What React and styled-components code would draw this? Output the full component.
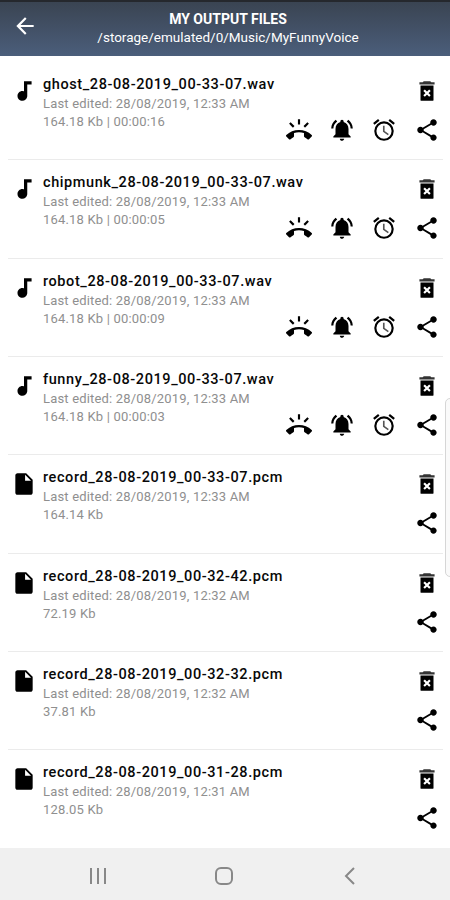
import React from "react";
import styled, { createGlobalStyle } from "styled-components";
import {
  MdArrowBack,
  MdAudiotrack,
  MdInsertDriveFile,
  MdRingVolume,
  MdNotificationsActive,
  MdShare,
} from "react-icons/md";

const GlobalStyle = createGlobalStyle`
  * { box-sizing: border-box; }
  body { margin: 0; background: #fff; font-family: Roboto, sans-serif; }
`;

const Screen = styled.div`
  position: relative;
  display: flex;
  flex-direction: column;
  width: 450px;
  height: 900px;
  overflow: hidden;
  background: #fff;
`;

const Header = styled.header`
  display: grid;
  grid-template-columns: 50px 1fr 44px;
  height: 56px;
  flex: none;
  border-top: 2px solid #25282d;
  background: linear-gradient(#3a4452, #4b5e7b);
  color: #fff;
`;

const BackButton = styled.button`
  display: flex;
  padding: 11px 0 0 11.5px;
  border: 0;
  background: none;
  color: inherit;
`;

const Heading = styled.div`
  padding-top: 8px;
  text-align: center;
  white-space: nowrap;
`;

const Title = styled.h1`
  margin: 0;
  font-size: 14px;
  line-height: 19px;
  font-weight: 700;
`;

const Path = styled.p`
  margin: 0;
  font-size: 13.5px;
  line-height: 17px;
`;

const List = styled.ul`
  display: flex;
  flex-direction: column;
  height: 792px;
  margin: 0;
  padding: 6.2px 7px 0 8px;
  list-style: none;
`;

const Row = styled.li`
  display: grid;
  grid-template-columns: 35px 1fr auto;
  height: 98.3px;
  flex: none;
  border-bottom: 1px solid #ebebeb;
  color: #000;
  &:last-child { border-bottom: 0; }
`;

const FileIcon = styled.div`
  padding: 16px 0 0 3.4px;
`;

const Details = styled.div`
  padding-top: 13px;
  white-space: nowrap;
`;

const Name = styled.div`
  width: 0;
  font-size: 14.5px;
  line-height: 20px;
  font-weight: 500;
  letter-spacing: 0.59px;
  color: #080808;
`;

const Meta = styled.div`
  width: 0;
  font-size: 13px;
  line-height: 18px;
  letter-spacing: 0.18px;
  color: #8f8f8f;
`;

const Actions = styled.div`
  display: flex;
  flex-direction: column;
  align-items: flex-end;
  gap: 13px;
  padding: 16px 3.4px 0 0;
`;

const ActionRow = styled.div`
  display: flex;
  gap: 16.4px;
`;

const IconButton = styled.button`
  display: flex;
  padding: 0;
  border: 0;
  background: none;
  color: inherit;
`;

const ScrollThumb = styled.div`
  position: absolute;
  top: 398px;
  right: -6px;
  width: 11px;
  height: 179px;
  border: 1px solid #d6d6d6;
  border-radius: 5px;
  background: #fafafa;
`;

const NavBar = styled.nav`
  display: flex;
  justify-content: space-between;
  align-items: center;
  height: 52px;
  padding: 3px 88px 0 86px;
  flex: none;
  background: #f0f0f0;
`;

const NavIcon = styled.svg`
  display: block;
  fill: none;
  stroke: #888;
  stroke-width: 2;
`;

const edited = (time) => `Last edited: 28/08/2019, ${time} AM`;

const files = [
  { name: "ghost_28-08-2019_00-33-07.wav", time: "12:33", info: "164.18 Kb | 00:00:16", audio: true },
  { name: "chipmunk_28-08-2019_00-33-07.wav", time: "12:33", info: "164.18 Kb | 00:00:05", audio: true },
  { name: "robot_28-08-2019_00-33-07.wav", time: "12:33", info: "164.18 Kb | 00:00:09", audio: true },
  { name: "funny_28-08-2019_00-33-07.wav", time: "12:33", info: "164.18 Kb | 00:00:03", audio: true },
  { name: "record_28-08-2019_00-33-07.pcm", time: "12:33", info: "164.14 Kb" },
  { name: "record_28-08-2019_00-32-42.pcm", time: "12:32", info: "72.19 Kb" },
  { name: "record_28-08-2019_00-32-32.pcm", time: "12:32", info: "37.81 Kb" },
  { name: "record_28-08-2019_00-31-28.pcm", time: "12:31", info: "128.05 Kb" },
];

const TrashIcon = () => (
  <svg width="26" height="26" viewBox="0 0 24 24">
    <path d="M9 3h6l1 1h3v2H5V4h3z" fill="#333" />
    <path d="M6 7h12v13.2a.8.8 0 0 1-.8.8H6.8a.8.8 0 0 1-.8-.8z" />
    <path d="M9.3 11.3l5.4 5.4M14.7 11.3l-5.4 5.4" stroke="#fff" strokeWidth="2" />
  </svg>
);

const AlarmIcon = () => (
  <svg width="26" height="26" viewBox="0 0 24 24" fill="none" stroke="#000" strokeWidth="2">
    <circle cx="12" cy="13" r="8" />
    <path d="M2.6 6.4l4.6-3.8M21.4 6.4l-4.6-3.8" />
    <path d="M11.8 8v5.3l4.2 3" stroke="#555" strokeWidth="1.5" />
  </svg>
);

function FileRow({ file }) {
  return (
    <Row>
      <FileIcon>
        {file.audio ? <MdAudiotrack size={26} /> : <MdInsertDriveFile size={26} />}
      </FileIcon>
      <Details>
        <Name>{file.name}</Name>
        <Meta>{edited(file.time)}</Meta>
        <Meta>{file.info}</Meta>
      </Details>
      <Actions>
        <IconButton aria-label="Delete"><TrashIcon /></IconButton>
        <ActionRow>
          {file.audio && (
            <>
              <IconButton aria-label="Set as ringtone"><MdRingVolume size={26} /></IconButton>
              <IconButton aria-label="Set as notification"><MdNotificationsActive size={26} /></IconButton>
              <IconButton aria-label="Set as alarm"><AlarmIcon /></IconButton>
            </>
          )}
          <IconButton aria-label="Share"><MdShare size={26} /></IconButton>
        </ActionRow>
      </Actions>
    </Row>
  );
}

export default function App() {
  return (
    <Screen>
      <GlobalStyle />
      <Header>
        <BackButton aria-label="Back"><MdArrowBack size={26} /></BackButton>
        <Heading>
          <Title>MY OUTPUT FILES</Title>
          <Path>/storage/emulated/0/Music/MyFunnyVoice</Path>
        </Heading>
      </Header>
      <List>
        {files.map((file) => <FileRow key={file.name} file={file} />)}
      </List>
      <NavBar>
        <NavIcon width="24" height="24" viewBox="0 0 24 24">
          <path d="M5 4v16M12 4v16M19 4v16" />
        </NavIcon>
        <NavIcon width="24" height="24" viewBox="0 0 24 24">
          <rect x="4" y="4" width="16" height="16" rx="5" />
        </NavIcon>
        <NavIcon width="24" height="24" viewBox="0 0 24 24">
          <path d="M16 4L8 12l8 8" />
        </NavIcon>
      </NavBar>
      <ScrollThumb />
    </Screen>
  );
}
